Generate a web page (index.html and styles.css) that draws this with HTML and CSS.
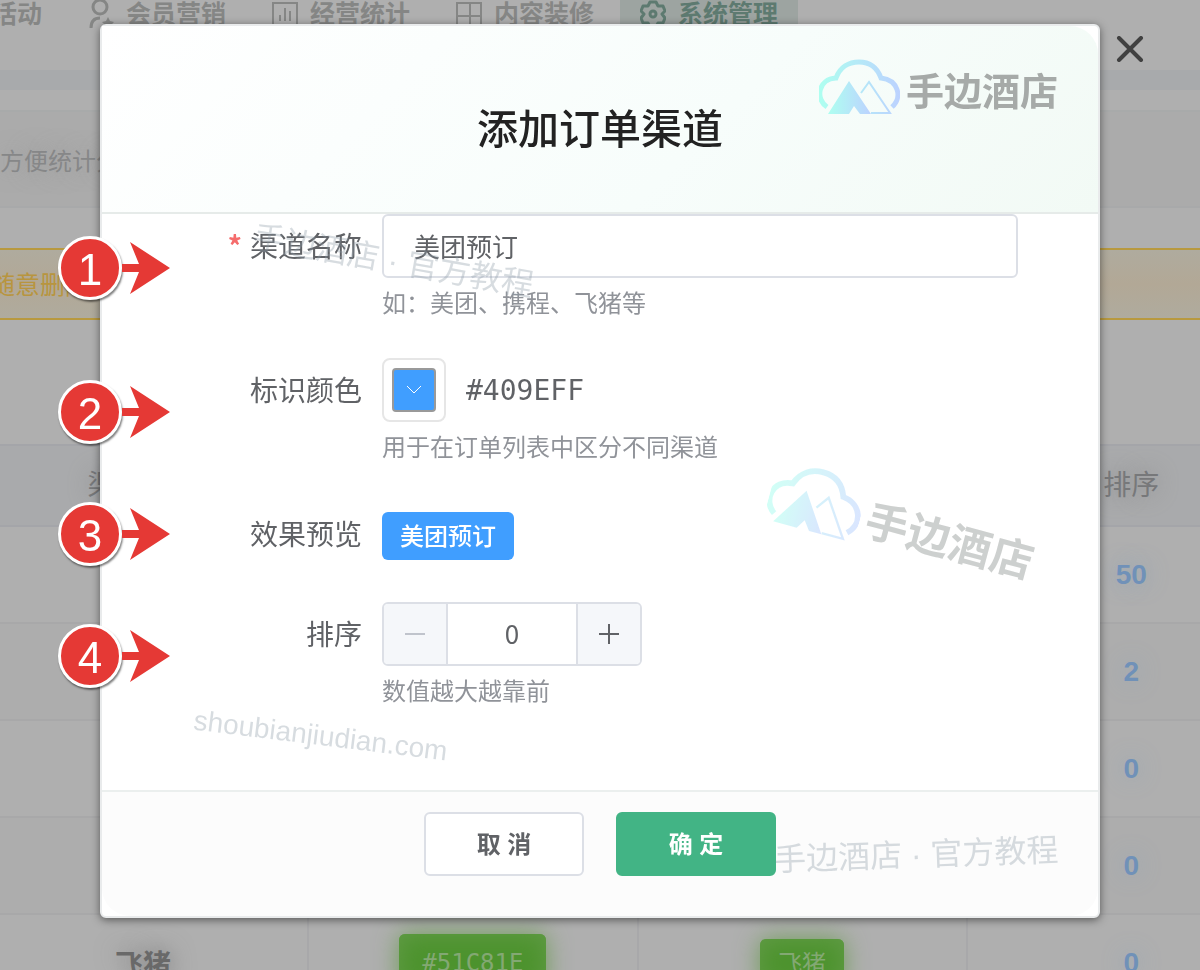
FILE: index.html
```html
<!DOCTYPE html>
<html lang="zh-CN">
<head>
	<meta charset="UTF-8">
	<title>添加订单渠道</title>
	<link rel="stylesheet" href="styles.css">
</head>
<body>
	<!-- 公用图标 -->
	<svg class="defs" width="0" height="0" aria-hidden="true">
		<defs>
			<linearGradient id="logoFill" x1="0" y1="0" x2="81" y2="0" gradientUnits="userSpaceOnUse">
				<stop offset="0" stop-color="#aefff0"/>
				<stop offset="1" stop-color="#bcd2ff"/>
			</linearGradient>
			<linearGradient id="peakFill" x1="9" y1="0" x2="52" y2="0" gradientUnits="userSpaceOnUse">
				<stop offset="0" stop-color="#aefff0"/>
				<stop offset="1" stop-color="#bcd2ff"/>
			</linearGradient>
			<symbol id="logo" viewBox="0 0 81 56">
				<path d="M8 48C-4 40-1 20 17 19C21 8 30 3 40 3S58 8 62 19C79 21 84 38 73 48" fill="none" stroke="url(#logoFill)" stroke-width="5"/>
				<path d="M9 55L30 22L52 55H41L35 47L30 55Z" fill="url(#peakFill)"/>
				<path d="M42 34L50 23L71 54H52" fill="none" stroke="url(#logoFill)" stroke-width="2"/>
			</symbol>
			<symbol id="arrow" viewBox="0 0 48 52">
				<path d="M0 22H17L8 0L48 26L8 52L17 30H0Z" fill="#e53935"/>
			</symbol>
		</defs>
	</svg>

	<div class="page">
		<ul class="nav">
			<li>活动</li>
			<li>
				<svg width="26" height="28" viewBox="0 0 26 28" fill="none" stroke="currentColor" stroke-width="3"><circle cx="12" cy="7" r="7"/><path d="M3 28C3 21 6 18 12 18"/><path d="M20 17l2 4 4 1-3 3v3h-6v-3l-3-3 4-1z" fill="currentColor" stroke="none"/></svg>
				会员营销
			</li>
			<li>
				<svg width="26" height="28" viewBox="0 0 26 28" fill="none" stroke="currentColor" stroke-width="2"><rect x="1" y="3" width="24" height="24"/><path d="M8 15v6M13 8v13M18 11v10"/></svg>
				经营统计
			</li>
			<li>
				<svg width="26" height="28" viewBox="0 0 26 28" fill="none" stroke="currentColor" stroke-width="2"><path d="M1 27V3H25V27M14 3V27M1 16H25"/></svg>
				内容装修
			</li>
			<li class="active">
				<svg width="26" height="28" viewBox="0 0 26 28" fill="none" stroke="currentColor" stroke-width="3"><path d="M10 2h6l2 4 5 0 2 5-3 3 3 4-2 5h-5l-2 4h-6l-2-4h-5l-2-5 3-4-3-3 2-5h5z" stroke-linejoin="round"/><circle cx="13" cy="14" r="3"/></svg>
				系统管理
			</li>
		</ul>
		<div class="crumb"></div>
		<p class="intro">方便统计分</p>
		<p class="warning">随意删除</p>
		<table class="list">
			<thead>
				<tr><th>渠道名称</th><th></th><th></th><th>排序</th></tr>
			</thead>
			<tbody>
				<tr><td></td><td></td><td></td><td class="num">50</td></tr>
				<tr><td></td><td></td><td></td><td class="num">2</td></tr>
				<tr><td></td><td></td><td></td><td class="num">0</td></tr>
				<tr><td></td><td></td><td></td><td class="num">0</td></tr>
				<tr>
					<td class="name">飞猪</td>
					<td><span class="code">#51C81E</span></td>
					<td><span class="chip">飞猪</span></td>
					<td class="num">0</td>
				</tr>
			</tbody>
		</table>
	</div>

	<div class="mask">
		<form class="dialog" role="dialog" aria-labelledby="title">
			<button class="close" type="button" aria-label="关闭">
				<svg width="28" height="26" viewBox="0 0 28 26" stroke="#404040" stroke-width="4" stroke-linecap="round"><path d="M3 2L25 24M25 2L3 24"/></svg>
			</button>
			<div class="header">
				<h1 id="title">添加订单渠道</h1>
			</div>
			<div class="body">
				<div class="row">
					<div class="mark"><b>1</b><svg width="48" height="52"><use href="#arrow"/></svg></div>
					<label for="name"><i>*</i>渠道名称</label>
					<div class="field">
						<input id="name" class="text" type="text" value="美团预订">
						<p class="hint">如：美团、携程、飞猪等</p>
					</div>
				</div>
				<div class="row">
					<div class="mark"><b>2</b><svg width="48" height="52"><use href="#arrow"/></svg></div>
					<label for="color">标识颜色</label>
					<div class="field">
						<div class="control">
							<button id="color" class="picker" type="button">
								<span class="swatch"><svg width="16" height="10" viewBox="0 0 16 10" fill="none" stroke="#fff" stroke-width="1"><path d="M1 1L8 8L15 1"/></svg></span>
							</button>
							<span class="hex">#409EFF</span>
						</div>
						<p class="hint">用于在订单列表中区分不同渠道</p>
					</div>
				</div>
				<div class="row">
					<div class="mark"><b>3</b><svg width="48" height="52"><use href="#arrow"/></svg></div>
					<span class="label">效果预览</span>
					<div class="field">
						<div class="control"><span class="tag">美团预订</span></div>
					</div>
				</div>
				<div class="row">
					<div class="mark"><b>4</b><svg width="48" height="52"><use href="#arrow"/></svg></div>
					<label for="sort">排序</label>
					<div class="field">
						<div class="stepper">
							<button type="button" aria-label="减少" disabled><svg width="20" height="20" viewBox="0 0 20 20" stroke="#c0c4cc" stroke-width="2"><path d="M0 10H20"/></svg></button>
							<input id="sort" type="text" value="0">
							<button type="button" aria-label="增加"><svg width="20" height="20" viewBox="0 0 20 20" stroke="#606266" stroke-width="2"><path d="M0 10H20M10 0V20"/></svg></button>
						</div>
						<p class="hint">数值越大越靠前</p>
					</div>
				</div>
			</div>
			<div class="footer">
				<button class="btn" type="button">取 消</button>
				<button class="btn primary" type="submit">确 定</button>
			</div>

			<!-- 水印 -->
			<div class="logo logo-top"><svg width="81" height="56"><use href="#logo"/></svg>手边酒店</div>
			<div class="logo logo-mid"><svg width="94" height="65"><use href="#logo"/></svg>手边酒店</div>
			<div class="wm wm1">手边酒店 · 官方教程</div>
			<div class="wm wm2">shoubianjiudian.com</div>
			<div class="wm wm3">手边酒店 · 官方教程</div>
		</form>
	</div>
</body>
</html>
```
FILE: styles.css
```css
*{
	box-sizing: border-box;
}
body{
	height: 100vh;
	margin: 0;
	overflow: hidden;
	background: #afafaf;
	color: #606266;
	font-family: "Noto Sans CJK SC", sans-serif;
}
ul,p,h1{
	margin: 0;
	padding: 0;
}
button,input{
	padding: 0;
	color: inherit;
	font-family: inherit;
}
svg{
	display: block;
	flex: none;
}
.defs{
	position: absolute;
}

/*底层页面*/
.page{
	height: 100vh;
	overflow: hidden;
}
.nav{
	display: flex;
	gap: 6px;
	height: 70px;
	margin-left: -28px;
	list-style: none;
	color: #858685;
	font-size: 25px;
	font-weight: bold;
	line-height: 24px;
}
.nav li{
	display: flex;
	gap: 12px;
	padding: 0 20px;
	white-space: nowrap;
}
.nav .active{
	background: #9da4a1;
	color: #5d7a70;
}
.crumb{
	height: 40px;
	border-top: 20px solid #a8aaac;
}
.intro{
	height: 98px;
	border-top: 2px solid #a8aaaa;
	border-bottom: 2px solid #a8a9aa;
	background: #ababab;
	color: #868788;
	font-size: 24px;
	line-height: 96px;
	text-shadow: 0 0 24px #999;
}
.warning{
	height: 72px;
	margin: 40px 0 124px;
	border: solid #b8993f;
	border-width: 2px 0;
	background: linear-gradient(#afab9e, #b2a896, #afab9e);
	color: #b8953f;
	font-size: 25px;
	line-height: 66px;
	text-indent: -10px;
}
.list{
	width: calc(100% + 118px);
	margin-left: -21px;
	border-collapse: collapse;
	table-layout: fixed;
	font-size: 28px;
}
.list th{
	height: 81px;
	padding: 0 0 6px;
	border-top: 2px solid #a4a5a9;
	border-bottom: 2px solid #a4a5a9;
	background: #a9aaac;
	color: #77787a;
	font-weight: normal;
	text-shadow: 0 0 24px #888;
}
.list td{
	height: 97px;
	padding: 0;
	border-right: 2px solid #a8a8aa;
	border-bottom: 2px solid #a8a8a9;
	text-align: center;
}
.list tr:nth-child(2n) td{
	background: #adadad;
}
.list .num{
	color: #7091b8;
	font-family: "Liberation Sans", sans-serif;
	font-weight: bold;
	text-shadow: 0 0 24px #8fa3b8;
}
.list .name{
	color: #696969;
	font-weight: bold;
	text-shadow: 0 0 24px #777;
}
.code,.chip{
	display: inline-block;
	border-radius: 6px;
	background: #4d932e;
	box-shadow: 0 0 24px #6f9d58, inset 0 0 24px #639c49;
	color: #83a873;
	font-size: 24px;
	vertical-align: middle;
}
.code{
	padding: 0 23px;
	font-family: "DejaVu Sans Mono", monospace;
	line-height: 58px;
}
.chip{
	padding: 0 18px 2px;
	line-height: 46px;
}

/*弹窗*/
.mask{
	position: fixed;
	inset: 0;
	padding: 24px 100px;
}
.dialog{
	position: relative;
	border: 2px solid #e9ebec;
	border-radius: 6px;
	background: #fff;
	box-shadow: 0 2px 8px rgba(0,0,0,.5);
}
.close{
	position: absolute;
	top: 10px;
	right: -46px;
	border: 0;
	background: none;
}
.header{
	padding: 70px 0 56px;
	border-bottom: 2px solid #e6ebe9;
	border-top-right-radius: 28px;
	background: linear-gradient(135deg, #fff, #f7fdfb 60%, #f2faf5);
	text-align: center;
}
.header h1{
	color: #222;
	font-size: 41px;
	font-weight: 500;
	line-height: 60px;
}
.body{
	display: flex;
	flex-direction: column;
	gap: 36px;
	padding: 0 80px 80px 0;
}
.row{
	position: relative;
	display: flex;
	gap: 20px;
}
.row label,.row .label{
	width: 260px;
	font-size: 28px;
	line-height: 62px;
	text-align: right;
}
.row label i{
	margin-right: 8px;
	color: #f56c6c;
	font-style: normal;
	font-weight: bold;
}
.field{
	flex: 1;
}
.control{
	display: flex;
	align-items: center;
	gap: 20px;
	height: 64px;
}
.text{
	display: block;
	width: 100%;
	height: 64px;
	padding: 0 30px 2px;
	border: 2px solid #dcdfe6;
	border-radius: 6px;
	background: #fff;
	font-size: 26px;
}
.hint{
	margin-top: 8px;
	padding-bottom: 4px;
	color: #909399;
	font-size: 24px;
	line-height: 32px;
}
.picker{
	width: 64px;
	height: 64px;
	padding: 8px;
	border: 2px solid #e6e6e6;
	border-radius: 8px;
	background: #fff;
}
.swatch{
	display: flex;
	align-items: center;
	justify-content: center;
	height: 44px;
	border: 2px solid #999;
	border-radius: 4px;
	background: #409eff;
}
.hex{
	font-family: "DejaVu Sans Mono", monospace;
	font-size: 28px;
}
.tag{
	margin-top: 4px;
	padding: 0 18px 2px;
	border-radius: 6px;
	background: #409eff;
	color: #fff;
	font-size: 24px;
	font-weight: 500;
	line-height: 46px;
}
.stepper{
	display: flex;
	width: 260px;
	height: 64px;
	border: 2px solid #dcdfe6;
	border-radius: 6px;
	overflow: hidden;
}
.stepper button{
	display: flex;
	align-items: center;
	justify-content: center;
	width: 62px;
	border: 0;
	background: #f5f7fa;
}
.stepper input{
	flex: 1;
	min-width: 0;
	padding-bottom: 4px;
	border: solid #dcdfe6;
	border-width: 0 2px;
	background: #fff;
	font-size: 26px;
	text-align: center;
}
.footer{
	display: flex;
	justify-content: center;
	gap: 32px;
	padding: 20px 0 40px;
	border-top: 2px solid #ebefee;
	border-radius: 0 0 28px 28px;
	background: #fcfcfc;
}
.btn{
	width: 160px;
	height: 64px;
	padding-bottom: 4px;
	border: 2px solid #dcdfe6;
	border-radius: 6px;
	background: #fff;
	font-family: "Liberation Sans", "Noto Sans CJK SC", sans-serif;
	font-size: 24px;
	font-weight: bold;
}
.primary{
	border-color: #42b485;
	background: #42b485;
	color: #fff;
}

/*步骤标记*/
.mark{
	position: absolute;
	top: 50%;
	left: -44px;
	display: flex;
	align-items: center;
	transform: translateY(-50%);
}
.mark b{
	width: 64px;
	height: 64px;
	border: 3px solid #fff;
	border-radius: 50%;
	background: #e53935;
	box-shadow: 1px 2px 2px rgba(0,0,0,.5);
	color: #fff;
	font: 44px/62px "Liberation Sans", sans-serif;
	text-align: center;
}

/*水印*/
.logo,.wm{
	position: absolute;
	pointer-events: none;
	white-space: nowrap;
}
.logo{
	display: flex;
	gap: 6px;
	color: #a6aaa8;
	font-weight: bold;
}
.logo-top{
	top: 33px;
	right: 40px;
	font-size: 38px;
	line-height: 60px;
}
.logo-mid{
	top: 465px;
	right: 60px;
	opacity: .55;
	font-size: 43px;
	line-height: 69px;
	transform: rotate(15deg);
}
.wm{
	color: rgba(140,155,165,.35);
	font-family: "Liberation Sans", "Noto Sans CJK SC", sans-serif;
	font-size: 32px;
	line-height: 40px;
}
.wm1{
	top: 215px;
	left: 149px;
	transform: rotate(10deg);
}
.wm2{
	top: 690px;
	left: 91px;
	font-size: 28px;
	transform: rotate(7deg);
}
.wm3{
	right: 40px;
	bottom: 41px;
	transform: rotate(-2deg);
}
```
